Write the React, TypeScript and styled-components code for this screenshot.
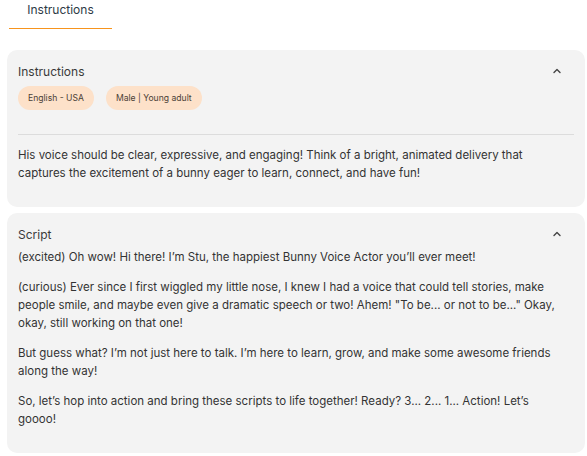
import styled, { createGlobalStyle } from "styled-components";

const GlobalStyle = createGlobalStyle`
  body {
    margin: 0;
    background: #ffffff;
    font-family: Inter, "Noto Sans", sans-serif;
    color: #333333;
  }
`;

const Page = styled.div`
  display: flex;
  flex-direction: column;
  padding: 0 2px 0 7px;
  width: 578px;
`;

const TabBar = styled.div`
  display: flex;
  height: 44px;
  margin-bottom: 6px;
`;

const Tab = styled.div<{ $active?: boolean }>`
  width: 103px;
  margin-left: 2px;
  height: 29px;
  box-sizing: border-box;
  display: flex;
  justify-content: center;
  align-items: flex-start;
  padding-top: 2px;
  font-size: 12px;
  color: #2d3a45;
  border-bottom: 1px solid ${(p) => (p.$active ? "#f7941d" : "transparent")};
`;

const Panels = styled.div`
  display: flex;
  flex-direction: column;
  gap: 6px;
`;

const Panel = styled.section`
  background: #f3f3f3;
  border-radius: 10px;
  padding: 13px 11px 12px 11px;
`;

const PanelHead = styled.div`
  display: flex;
  justify-content: space-between;
  align-items: center;
  height: 16px;
  font-size: 12px;
  color: #3a3a3a;
`;

const Chevron = styled.svg`
  width: 10px;
  height: 10px;
  margin-right: 12px;
  color: #444;
`;

const ChipRow = styled.div`
  display: flex;
  gap: 12px;
  margin-top: 7px;
`;

const Chip = styled.span`
  display: inline-flex;
  align-items: center;
  height: 24px;
  padding: 0 10px;
  border-radius: 12px;
  background: #fde1c9;
  font-size: 8.6px;
  color: #4a4036;
`;

const Divider = styled.hr`
  border: none;
  border-top: 1px solid #dcdcdc;
  margin: 24px 0 11px 0;
`;

const Body = styled.div<{ $bottom: number }>`
  font-size: 11.5px;
  line-height: 18px;
  color: #333333;
  padding-right: 18px;
  padding-bottom: ${(p) => p.$bottom}px;
  p {
    margin: 0 0 12px 0;
  }
  p:last-child {
    margin-bottom: 0;
  }
`;

const ScriptBody = styled(Body)`
  margin-top: 6px;
`;

const ChevronUp = () => (
  <Chevron viewBox="0 0 10 10" fill="none">
    <path d="M2 6.5 L5 3.5 L8 6.5" stroke="currentColor" strokeWidth="1.4" strokeLinecap="round" strokeLinejoin="round" />
  </Chevron>
);

export default function App() {
  return (
    <>
      <GlobalStyle />
      <Page>
        <TabBar>
          <Tab $active>Instructions</Tab>
        </TabBar>
        <Panels>
          <Panel>
            <PanelHead>
              Instructions
              <ChevronUp />
            </PanelHead>
            <ChipRow>
              <Chip>English - USA</Chip>
              <Chip>Male | Young adult</Chip>
            </ChipRow>
            <Divider />
            <Body $bottom={13}>
              <p>
                His voice should be clear, expressive, and engaging! Think of a bright, animated delivery that
                captures the excitement of a bunny eager to learn, connect, and have fun!
              </p>
            </Body>
          </Panel>
          <Panel>
            <PanelHead>
              Script
              <ChevronUp />
            </PanelHead>
            <ScriptBody $bottom={13}>
              <p>(excited) Oh wow! Hi there! I’m Stu, the happiest Bunny Voice Actor you’ll ever meet!</p>
              <p>
                (curious) Ever since I first wiggled my little nose, I knew I had a voice that could tell stories, make
                people smile, and maybe even give a dramatic speech or two! Ahem! "To be... or not to be..." Okay,
                okay, still working on that one!
              </p>
              <p>
                But guess what? I’m not just here to talk. I’m here to learn, grow, and make some awesome friends
                along the way!
              </p>
              <p>
                So, let’s hop into action and bring these scripts to life together! Ready? 3... 2... 1... Action! Let’s
                <br />
                goooo!
              </p>
            </ScriptBody>
          </Panel>
        </Panels>
      </Page>
    </>
  );
}
